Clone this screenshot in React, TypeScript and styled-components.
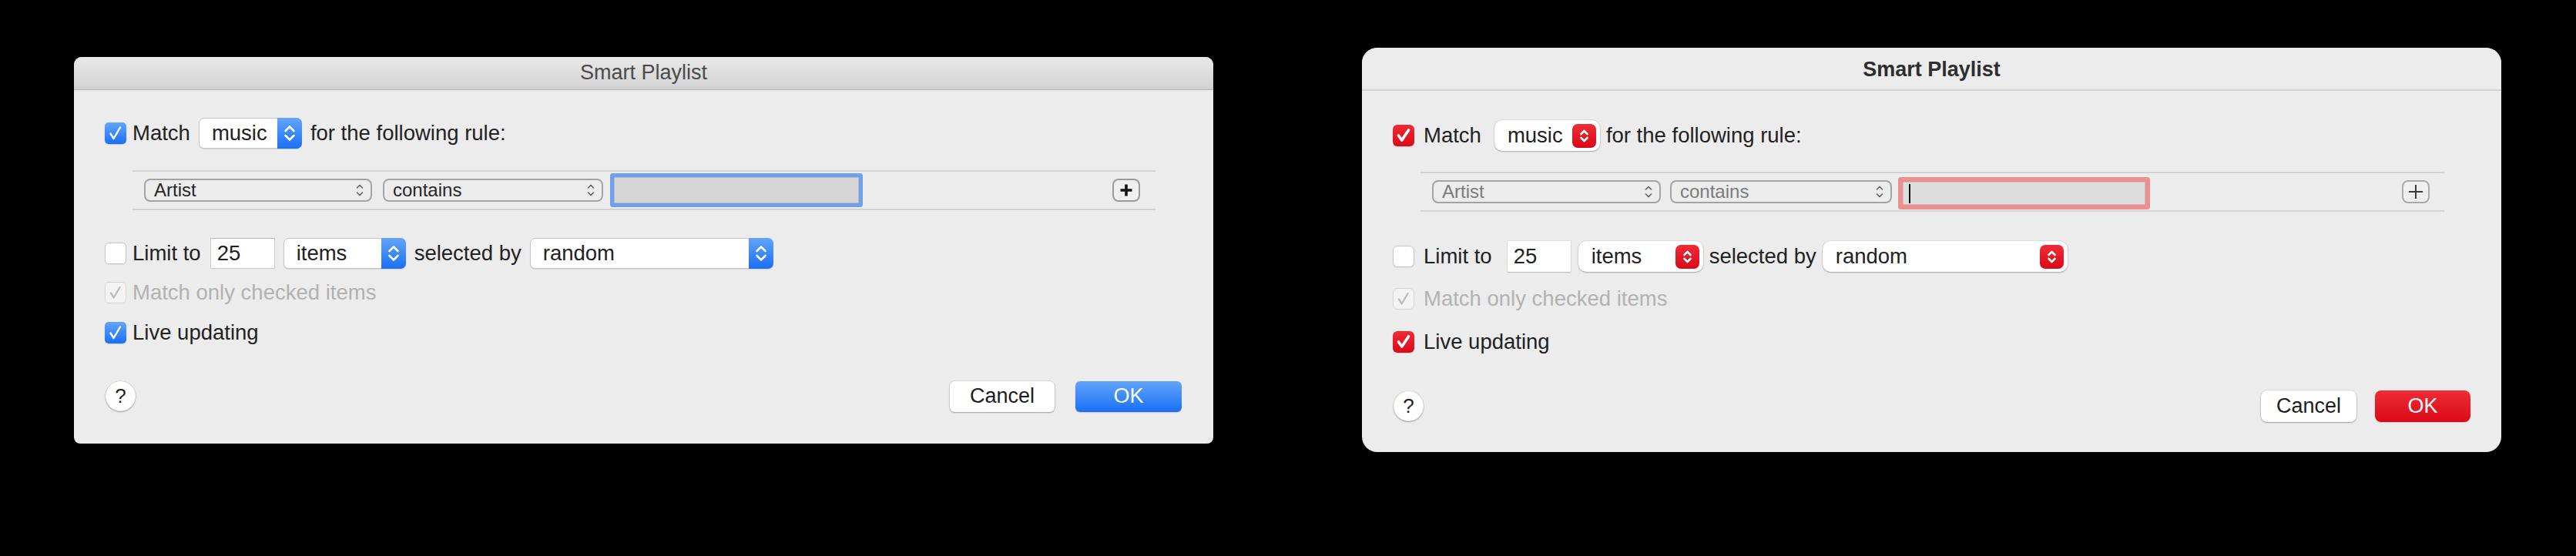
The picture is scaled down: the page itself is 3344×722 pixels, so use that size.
import React from "react";
import styled, { createGlobalStyle, css } from "styled-components";

type Look = "classic" | "modern";

const GlobalStyle = createGlobalStyle`
  html, body {
    margin: 0;
    padding: 0;
    background: #000;
  }
  body {
    font-family: "Liberation Sans", Arial, sans-serif;
    -webkit-font-smoothing: antialiased;
  }
`;

// per-look colours and sizes
const looks = {
  classic: {
    height: 502,
    radius: "10px 10px 8px 8px",
    accentTop: "#62a5fc",
    accentBottom: "#1a6ff5",
    ring: "rgba(78, 142, 238, 0.8)",
    ringWidth: 5,
    fieldBg: "#d5d5d5",
    ruleText: "#262626",
    gap: 11,
  },
  modern: {
    height: 525,
    radius: "20px",
    accentTop: "#ee2d37",
    accentBottom: "#da0a17",
    ring: "rgba(238, 120, 120, 0.8)",
    ringWidth: 6,
    fieldBg: "#dddddd",
    ruleText: "#7b7b7b",
    gap: 8,
  },
};

const Page = styled.div`
  display: flex;
  justify-content: space-between;
  align-items: center;
  padding: 62px 97px 0 96px;
`;

const Window = styled.div<{ $look: Look }>`
  width: 1479px;
  height: ${({ $look }) => looks[$look].height}px;
  background: #ececec;
  border-radius: ${({ $look }) => looks[$look].radius};
  overflow: hidden;
  display: flex;
  flex-direction: column;
  color: #222;
  font-size: 27.5px;
`;

const TitleBar = styled.div<{ $look: Look }>`
  flex: none;
  box-sizing: border-box;
  display: flex;
  align-items: center;
  justify-content: center;
  font-size: 27px;
  ${({ $look }) =>
    $look === "classic"
      ? css`
          height: 43px;
          background: linear-gradient(#e9e9e9, #d2d2d2);
          border-bottom: 1px solid #b3b3b3;
          color: #4b4b4b;
          font-weight: 400;
        `
      : css`
          height: 56px;
          padding-top: 2px;
          background: #ececec;
          border-bottom: 2px solid #d4d4d4;
          color: #2e2e2e;
          font-weight: 700;
        `}
`;

const Body = styled.div<{ $look: Look }>`
  flex: 1;
  display: flex;
  flex-direction: column;
  padding: ${({ $look }) =>
    $look === "classic" ? "36px 40px 41px 40px" : "38px 39px 39px 40px"};
`;

const Row = styled.div<{ $look: Look; $mt?: number; $h?: number }>`
  display: flex;
  align-items: center;
  gap: ${({ $look }) => looks[$look].gap}px;
  margin-top: ${({ $mt }) => $mt ?? 0}px;
  height: ${({ $h }) => $h ?? 40}px;
  white-space: nowrap;
`;

const CheckLabel = styled.label<{ $look: Look; $dim?: boolean }>`
  display: flex;
  align-items: center;
  gap: ${({ $look }) => ($look === "classic" ? 8 : 12)}px;
  color: ${({ $dim }) => ($dim ? "#b2b2b2" : "inherit")};
`;

const Box = styled.span<{ $look: Look; $state: "on" | "off" | "dim" }>`
  flex: none;
  width: 28px;
  height: 28px;
  box-sizing: border-box;
  border-radius: ${({ $look }) => ($look === "classic" ? 5 : 6)}px;
  display: flex;
  align-items: center;
  justify-content: center;
  ${({ $look, $state }) =>
    $state === "on"
      ? css`
          background: linear-gradient(${looks[$look].accentTop}, ${looks[$look].accentBottom});
          box-shadow: 0 1px 1px rgba(0, 0, 0, 0.15);
        `
      : $state === "off"
      ? css`
          background: #fff;
          border: 1px solid #c4c4c4;
          box-shadow: 0 1px 1px rgba(0, 0, 0, 0.06);
        `
      : css`
          background: #f3f3f3;
          border: 1px solid #d6d6d6;
        `}
`;

const Popup = styled.div<{ $look: Look; $w: number; $ml?: number }>`
  flex: none;
  width: ${({ $w }) => $w}px;
  height: 40px;
  box-sizing: border-box;
  margin-left: ${({ $ml }) => $ml ?? 0}px;
  display: flex;
  align-items: center;
  background: #fff;
  padding-left: 16px;
  ${({ $look }) =>
    $look === "classic"
      ? css`
          border: 1px solid #c6c6c6;
          border-radius: 7px;
          box-shadow: 0 1px 1px rgba(0, 0, 0, 0.1);
        `
      : css`
          border-radius: 10px;
          box-shadow: 0 0 0 0.5px rgba(0, 0, 0, 0.12), 0 1px 2px rgba(0, 0, 0, 0.25);
          padding-left: 17px;
        `}
`;

const PopupText = styled.span`
  flex: 1;
`;

const Stepper = styled.span<{ $look: Look }>`
  flex: none;
  display: flex;
  align-items: center;
  justify-content: center;
  background: linear-gradient(
    ${({ $look }) => looks[$look].accentTop},
    ${({ $look }) => looks[$look].accentBottom}
  );
  ${({ $look }) =>
    $look === "classic"
      ? css`
          width: 32px;
          height: 40px;
          margin-right: -1px;
          border-radius: 0 7px 7px 0;
        `
      : css`
          width: 31px;
          height: 31px;
          margin-right: 5px;
          border-radius: 7px;
        `}
`;

const RuleBox = styled.div<{ $look: Look; $mt: number }>`
  margin: ${({ $mt }) => $mt}px 35px 0 36px;
  height: 52px;
  box-sizing: border-box;
  border-top: 2px solid #d3d3d3;
  border-bottom: 2px solid #d3d3d3;
  display: flex;
  align-items: center;
  padding-left: 15px;
  gap: ${({ $look }) => ($look === "classic" ? 14 : 12)}px;
`;

const RuleSelect = styled.div<{ $look: Look; $w: number }>`
  flex: none;
  width: ${({ $w }) => $w}px;
  height: 30px;
  box-sizing: border-box;
  border: 2px solid #a3a3a3;
  border-radius: 8px;
  background: #ececec;
  display: flex;
  align-items: center;
  justify-content: space-between;
  padding: 0 9px 0 11px;
  font-size: 24px;
  color: ${({ $look }) => looks[$look].ruleText};
`;

const SearchField = styled.div<{ $look: Look }>`
  flex: none;
  box-sizing: border-box;
  display: flex;
  align-items: center;
  background: ${({ $look }) => looks[$look].fieldBg};
  border: 1px solid rgba(0, 0, 0, 0.12);
  border-radius: 1px;
  box-shadow: 0 0 0 ${({ $look }) => looks[$look].ringWidth}px
    ${({ $look }) => looks[$look].ring};
  ${({ $look }) =>
    $look === "classic"
      ? css`
          width: 318px;
          height: 34px;
          margin-left: 0;
        `
      : css`
          width: 315px;
          height: 30px;
          margin-left: 2px;
          margin-top: 4px;
        `}
`;

const Caret = styled.span`
  width: 2px;
  height: 25px;
  margin-left: 7px;
  background: #111;
`;

const AddButton = styled.div<{ $look: Look }>`
  flex: none;
  margin-left: auto;
  margin-right: ${({ $look }) => ($look === "classic" ? 20 : 19)}px;
  width: 36px;
  height: 30px;
  box-sizing: border-box;
  border: 2px solid ${({ $look }) => ($look === "classic" ? "#9b9b9b" : "#ababab")};
  border-radius: 8px;
  background: #efefef;
  display: flex;
  align-items: center;
  justify-content: center;
`;

const CountField = styled.div<{ $look: Look; $ml: number }>`
  flex: none;
  width: ${({ $look }) => ($look === "classic" ? 84 : 82)}px;
  height: 40px;
  box-sizing: border-box;
  margin-left: ${({ $ml }) => $ml}px;
  display: flex;
  align-items: center;
  padding-left: 8px;
  background: #fff;
  ${({ $look }) =>
    $look === "classic"
      ? css`
          border: 1px solid #cdcdcd;
          border-top-color: #b9b9b9;
        `
      : css`
          box-shadow: 0 0 0 0.5px rgba(0, 0, 0, 0.1), 0 1px 1px rgba(0, 0, 0, 0.15);
        `}
`;

const Footer = styled.div<{ $look: Look }>`
  margin-top: auto;
  height: ${({ $look }) => ($look === "classic" ? 40 : 41)}px;
  display: flex;
  align-items: center;
`;

const HelpButton = styled.div`
  flex: none;
  width: 39px;
  height: 39px;
  margin-left: 1px;
  border-radius: 50%;
  background: #fff;
  box-shadow: 0 0 0 0.5px rgba(0, 0, 0, 0.15), 0 1px 2px rgba(0, 0, 0, 0.3);
  display: flex;
  align-items: center;
  justify-content: center;
  font-size: 26px;
  color: #1d1d1d;
`;

const PushButton = styled.div<{ $look: Look; $w: number; $primary?: boolean; $ml: number }>`
  flex: none;
  width: ${({ $w }) => $w}px;
  height: 100%;
  margin-left: ${({ $ml }) => $ml}px;
  box-sizing: border-box;
  border-radius: ${({ $look }) => ($look === "classic" ? 6 : 8)}px;
  display: flex;
  align-items: center;
  justify-content: center;
  font-size: 27px;
  ${({ $look, $primary }) =>
    $primary
      ? css`
          color: #fff;
          background: linear-gradient(${looks[$look].accentTop}, ${looks[$look].accentBottom});
          box-shadow: 0 1px 1px rgba(0, 0, 0, 0.15);
        `
      : css`
          color: #1d1d1d;
          background: #fff;
          box-shadow: 0 0 0 0.5px rgba(0, 0, 0, 0.15), 0 1px 2px rgba(0, 0, 0, 0.28);
        `}
`;

const CheckMark = ({ look, color }: { look: Look; color: string }) => (
  <svg width="28" height="28" viewBox="0 0 28 28">
    <path
      d={look === "classic" ? "M7.5 14.5 L11.5 21 L20 6.5" : "M7.5 14 L11.8 20 L20.5 7"}
      fill="none"
      stroke={color}
      strokeWidth={look === "classic" ? 2.4 : 3.6}
      strokeLinecap="round"
      strokeLinejoin="round"
    />
  </svg>
);

const Chevrons = ({ look }: { look: Look }) =>
  look === "classic" ? (
    <svg width="32" height="40" viewBox="0 0 32 40">
      <path
        d="M10.5 17 L16 11.5 L21.5 17 M10.5 23 L16 28.5 L21.5 23"
        fill="none"
        stroke="#fff"
        strokeWidth="2.6"
        strokeLinecap="round"
        strokeLinejoin="round"
      />
    </svg>
  ) : (
    <svg width="31" height="31" viewBox="0 0 31 31">
      <path
        d="M11.5 13 L15.5 9 L19.5 13 M11.5 18 L15.5 22 L19.5 18"
        fill="none"
        stroke="#fff"
        strokeWidth="2.6"
        strokeLinecap="round"
        strokeLinejoin="round"
      />
    </svg>
  );

const SmallChevrons = () => (
  <svg width="10" height="22" viewBox="0 0 10 22">
    <path
      d="M1.5 8 L5 4.5 L8.5 8 M1.5 14 L5 17.5 L8.5 14"
      fill="none"
      stroke="#5e5e5e"
      strokeWidth="1.6"
      strokeLinecap="round"
      strokeLinejoin="round"
    />
  </svg>
);

const Plus = ({ look }: { look: Look }) =>
  look === "classic" ? (
    <svg width="18" height="18" viewBox="0 0 18 18">
      <path d="M9 1.5 V16.5 M1.5 9 H16.5" stroke="#141414" strokeWidth="3.6" />
    </svg>
  ) : (
    <svg width="20" height="20" viewBox="0 0 20 20">
      <path d="M10 1 V19 M1 10 H19" stroke="#3a3a3a" strokeWidth="2" />
    </svg>
  );

const Check = ({
  look,
  state,
  children,
}: {
  look: Look;
  state: "on" | "off" | "dim";
  children: React.ReactNode;
}) => (
  <CheckLabel $look={look} $dim={state === "dim"}>
    <Box $look={look} $state={state}>
      {state === "on" && <CheckMark look={look} color="#fff" />}
      {state === "dim" && <CheckMark look="classic" color="#b9b9b9" />}
    </Box>
    {children}
  </CheckLabel>
);

const SmartPlaylist = ({ look }: { look: Look }) => {
  const classic = look === "classic";
  return (
    <Window $look={look}>
      <TitleBar $look={look}>Smart Playlist</TitleBar>
      <Body $look={look}>
        <Row $look={look}>
          <Check look={look} state="on">
            Match
          </Check>
          <Popup $look={look} $w={classic ? 134 : 137} $ml={classic ? 0 : 9}>
            <PopupText>music</PopupText>
            <Stepper $look={look}>
              <Chevrons look={look} />
            </Stepper>
          </Popup>
          <span>for the following rule:</span>
        </Row>

        <RuleBox $look={look} $mt={classic ? 28 : 27}>
          <RuleSelect $look={look} $w={classic ? 296 : 297}>
            <span>Artist</span>
            <SmallChevrons />
          </RuleSelect>
          <RuleSelect $look={look} $w={classic ? 286 : 288}>
            <span>contains</span>
            <SmallChevrons />
          </RuleSelect>
          <SearchField $look={look}>{!classic && <Caret />}</SearchField>
          <AddButton $look={look}>
            <Plus look={look} />
          </AddButton>
        </RuleBox>

        <Row $look={look} $mt={classic ? 36 : 38}>
          <Check look={look} state="off">
            Limit to
          </Check>
          <CountField $look={look} $ml={classic ? 1 : 12}>
            25
          </CountField>
          <Popup $look={look} $w={classic ? 159 : 162} $ml={classic ? 0 : 2}>
            <PopupText>items</PopupText>
            <Stepper $look={look}>
              <Chevrons look={look} />
            </Stepper>
          </Popup>
          <span>selected by</span>
          <Popup $look={look} $w={classic ? 316 : 318}>
            <PopupText>random</PopupText>
            <Stepper $look={look}>
              <Chevrons look={look} />
            </Stepper>
          </Popup>
        </Row>

        <Row $look={look} $mt={classic ? 16 : 20} $h={30}>
          <Check look={look} state="dim">
            Match only checked items
          </Check>
        </Row>

        <Row $look={look} $mt={classic ? 22 : 26} $h={30}>
          <Check look={look} state="on">
            Live updating
          </Check>
        </Row>

        <Footer $look={look}>
          <HelpButton>?</HelpButton>
          <PushButton $look={look} $w={classic ? 136 : 124} $ml={classic ? 1057 : 1087}>
            Cancel
          </PushButton>
          <PushButton $look={look} $w={classic ? 138 : 124} $ml={classic ? 27 : 24} $primary>
            OK
          </PushButton>
        </Footer>
      </Body>
    </Window>
  );
};

export default function App() {
  return (
    <>
      <GlobalStyle />
      <Page>
        <SmartPlaylist look="classic" />
        <SmartPlaylist look="modern" />
      </Page>
    </>
  );
}
